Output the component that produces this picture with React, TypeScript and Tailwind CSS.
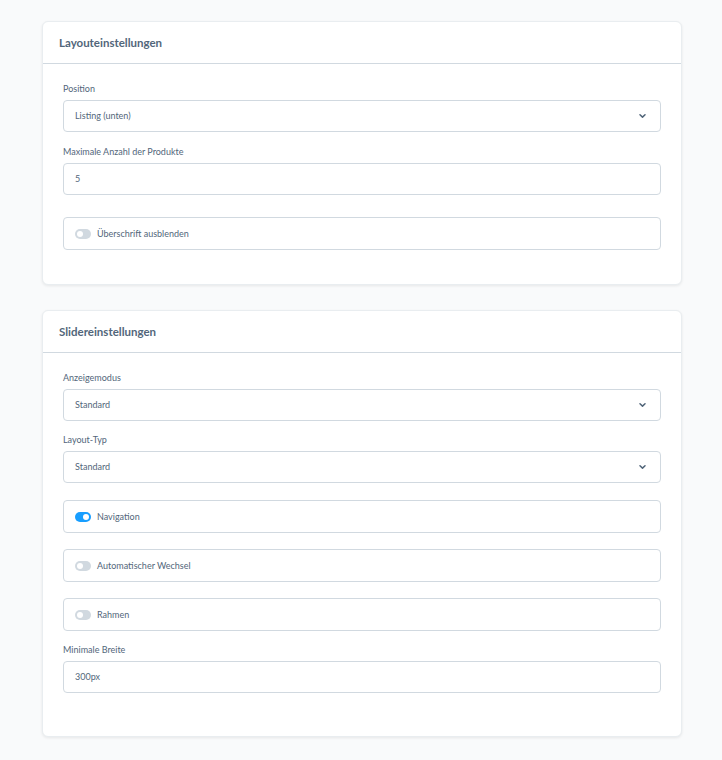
import React from "react";

const font = { fontFamily: "Lato, 'Noto Sans', sans-serif" };

function Label({ children }: { children: React.ReactNode }) {
  return <div className="text-[9px] leading-[14px] text-[#52667a] mb-1">{children}</div>;
}

function Chevron() {
  return (
    <svg width="7" height="5" viewBox="0 0 7 5" className="absolute right-[14px] top-1/2 -translate-y-1/2">
      <path d="M1 1.2 L3.5 3.6 L6 1.2" fill="none" stroke="#52667a" strokeWidth="1.5" strokeLinecap="round" strokeLinejoin="round" />
    </svg>
  );
}

function Select({ value }: { value: string }) {
  return (
    <div className="relative h-[32px] border border-[#d1d9e0] rounded-[4px] bg-white flex items-center px-[11px] text-[9px] text-[#52667a]">
      {value}
      <Chevron />
    </div>
  );
}

function Input({ value }: { value: string }) {
  return (
    <div className="h-[32px] border border-[#d1d9e0] rounded-[4px] bg-white flex items-center px-[11px] text-[9px] text-[#52667a]">
      {value}
    </div>
  );
}

function Switch({ label, on }: { label: string; on?: boolean }) {
  return (
    <div className="h-[33px] border border-[#d1d9e0] rounded-[4px] bg-white flex items-center pl-[11px] text-[9px] text-[#52667a]">
      <div
        className={
          "w-[16px] h-[10px] rounded-full flex items-center px-[2px] mr-[6px] " +
          (on ? "bg-[#189eff] justify-end" : "bg-[#d1d9e0] justify-start")
        }
      >
        <div className="w-[6px] h-[6px] rounded-full bg-white" />
      </div>
      {label}
    </div>
  );
}

function Card({ title, children, pb }: { title: string; children: React.ReactNode; pb: string }) {
  return (
    <div className="bg-white rounded-[6px] border border-[#e9edf0] shadow-[0_1px_3px_rgba(0,0,0,0.08)]">
      <div className="h-[42px] flex items-center px-[16px] border-b border-[#d1d9e0] text-[11.5px] font-bold text-[#52667a]">
        {title}
      </div>
      <div className={"px-[20px] pt-[18px] " + pb}>{children}</div>
    </div>
  );
}

export default function App() {
  return (
    <div style={font} className="min-h-[760px] w-[722px] bg-[#f9fafb] pt-[21px] pl-[42px] pr-[40px] pb-[24px]">
      <div className="w-[640px] flex flex-col gap-[25px]">
        <Card title="Layouteinstellungen" pb="pb-[34px]">
          <Label>Position</Label>
          <Select value="Listing (unten)" />
          <div className="h-[13px]" />
          <Label>Maximale Anzahl der Produkte</Label>
          <Input value="5" />
          <div className="h-[22px]" />
          <Switch label="Überschrift ausblenden" />
        </Card>
        <Card title="Slidereinstellungen" pb="pb-[43px]">
          <Label>Anzeigemodus</Label>
          <Select value="Standard" />
          <div className="h-[12px]" />
          <Label>Layout-Typ</Label>
          <Select value="Standard" />
          <div className="h-[17px]" />
          <Switch label="Navigation" on />
          <div className="h-[16px]" />
          <Switch label="Automatischer Wechsel" />
          <div className="h-[16px]" />
          <Switch label="Rahmen" />
          <div className="h-[12px]" />
          <Label>Minimale Breite</Label>
          <Input value="300px" />
        </Card>
      </div>
    </div>
  );
}
